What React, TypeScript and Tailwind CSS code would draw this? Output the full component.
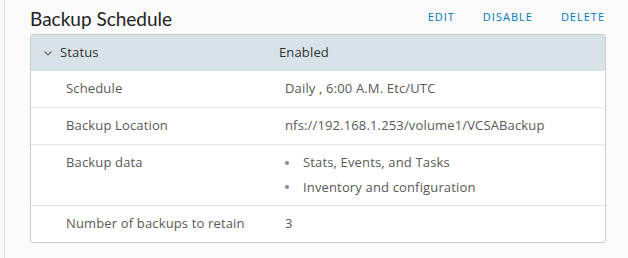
export default function App() {
  const rows = [
    { label: "Schedule", value: "Daily , 6:00 A.M. Etc/UTC" },
    { label: "Backup Location", value: "nfs://192.168.1.253/volume1/VCSABackup" },
  ];
  const items = ["Stats, Events, and Tasks", "Inventory and configuration"];

  return (
    <div
      className="w-[628px] h-[258px] bg-[#fafafa] flex"
      style={{ fontFamily: "'Open Sans', Lato, sans-serif" }}
    >
      {/* left rail */}
      <div className="w-[5px] border-r border-[#dcdcdc] shrink-0" />

      <div className="flex-1 pl-[25px] pr-[22px]">
        {/* Header */}
        <div className="h-[34px] flex items-center justify-between">
          <h2 className="text-[19px] leading-none text-[#222] pt-[2px] font-[Lato,sans-serif]">
            Backup Schedule
          </h2>
          <div className="flex items-center gap-[28px] text-[11px] tracking-[1px] text-[#0079b8] pr-[1px]">
            <button>EDIT</button>
            <button>DISABLE</button>
            <button>DELETE</button>
          </div>
        </div>

        {/* Card */}
        <div className="border border-[#cccccc] rounded-[3px] bg-white text-[13px] tracking-[0.15px] text-[#595959] overflow-hidden">
          <div className="h-[36px] bg-[#d8e3e9] flex items-center text-[#313131]">
            <div className="w-[248px] flex items-center pl-[12px]">
              <svg width="10" height="10" viewBox="0 0 10 10" className="mr-[7px]">
                <path d="M1.5 3.5 L5 7 L8.5 3.5" fill="none" stroke="#666" strokeWidth="1.1" />
              </svg>
              Status
            </div>
            <div>Enabled</div>
          </div>

          {rows.map((r) => (
            <div key={r.label} className="h-[37px] flex items-center border-b border-[#e4e4e4]">
              <div className="w-[254px] pl-[35px]">{r.label}</div>
              <div>{r.value}</div>
            </div>
          ))}

          <div className="h-[61px] flex border-b border-[#e4e4e4]">
            <div className="w-[254px] pl-[35px] pt-[8px]">Backup data</div>
            <ul className="pt-[8px] flex flex-col gap-[5px]">
              {items.map((t) => (
                <li key={t} className="flex items-center">
                  <span className="w-[4px] h-[4px] rounded-full bg-[#8a8a8a] mr-[14px]" />
                  {t}
                </li>
              ))}
            </ul>
          </div>

          <div className="h-[36px] flex items-center">
            <div className="w-[254px] pl-[35px]">Number of backups to retain</div>
            <div>3</div>
          </div>
        </div>
      </div>
    </div>
  );
}
